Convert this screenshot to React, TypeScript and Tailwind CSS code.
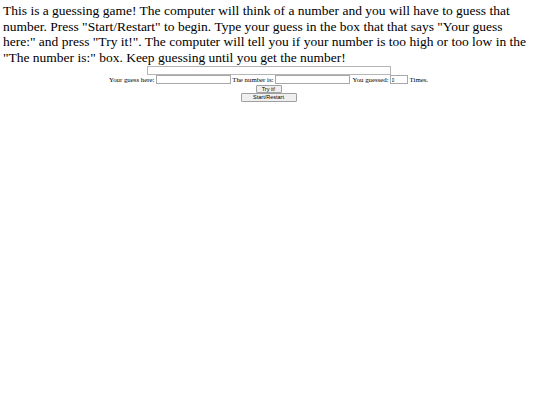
import React from "react";

export default function App() {
  return (
    <div className="w-[540px] h-[405px] bg-white px-[3px] pt-[3px] text-black" style={{ fontFamily: '"Liberation Serif", serif' }}>
      <p className="text-[13.5px] leading-[15.5px] m-0">
        This is a guessing game! The computer will think of a number and you will have to guess that number. Press "Start/Restart" to begin. Type your guess in the box that that says "Your guess here:" and press "Try it!". The computer will tell you if your number is too high or too low in the "The number is:" box. Keep guessing until you get the number!
      </p>
      <div className="flex flex-col items-center">
        <input
          readOnly
          className="block mt-[1px] w-[244px] h-[9px] border border-[#b5b5b5] bg-white p-0 outline-none ml-[-3px]"
        />
        <div className="flex items-center h-[9px] text-[6.8px] leading-[9px] ml-[-3px]">
          <span>Your guess here:</span>
          <input readOnly className="ml-[2px] w-[75px] h-[9px] border border-[#a8a8a8] bg-white p-0 outline-none" />
          <span className="ml-[1px]">The number is:</span>
          <input readOnly className="ml-[2px] w-[75px] h-[9px] border border-[#a8a8a8] bg-white p-0 outline-none" />
          <span className="ml-[2px]">You guessed:</span>
          <input
            readOnly
            value="0"
            className="ml-[1px] w-[18px] h-[9px] border border-[#a8a8a8] bg-white px-[1px] py-0 text-[5px] leading-[7px] outline-none"
            style={{ fontFamily: '"Liberation Sans", sans-serif' }}
          />
          <span className="ml-[2px]">Times.</span>
        </div>
        <button
          className="mt-[1px] w-[26px] h-[8px] border border-[#a0a0a0] bg-[#efefef] rounded-[1px] p-0 text-[5.5px] leading-[6px] ml-[-3px]"
          style={{ fontFamily: '"Liberation Sans", sans-serif' }}
        >
          Try it!
        </button>
        <button
          className="w-[56px] h-[9px] border border-[#a0a0a0] bg-[#efefef] rounded-[1px] p-0 text-[5.5px] leading-[7px] ml-[-3px]"
          style={{ fontFamily: '"Liberation Sans", sans-serif' }}
        >
          Start/Restart
        </button>
      </div>
    </div>
  );
}
